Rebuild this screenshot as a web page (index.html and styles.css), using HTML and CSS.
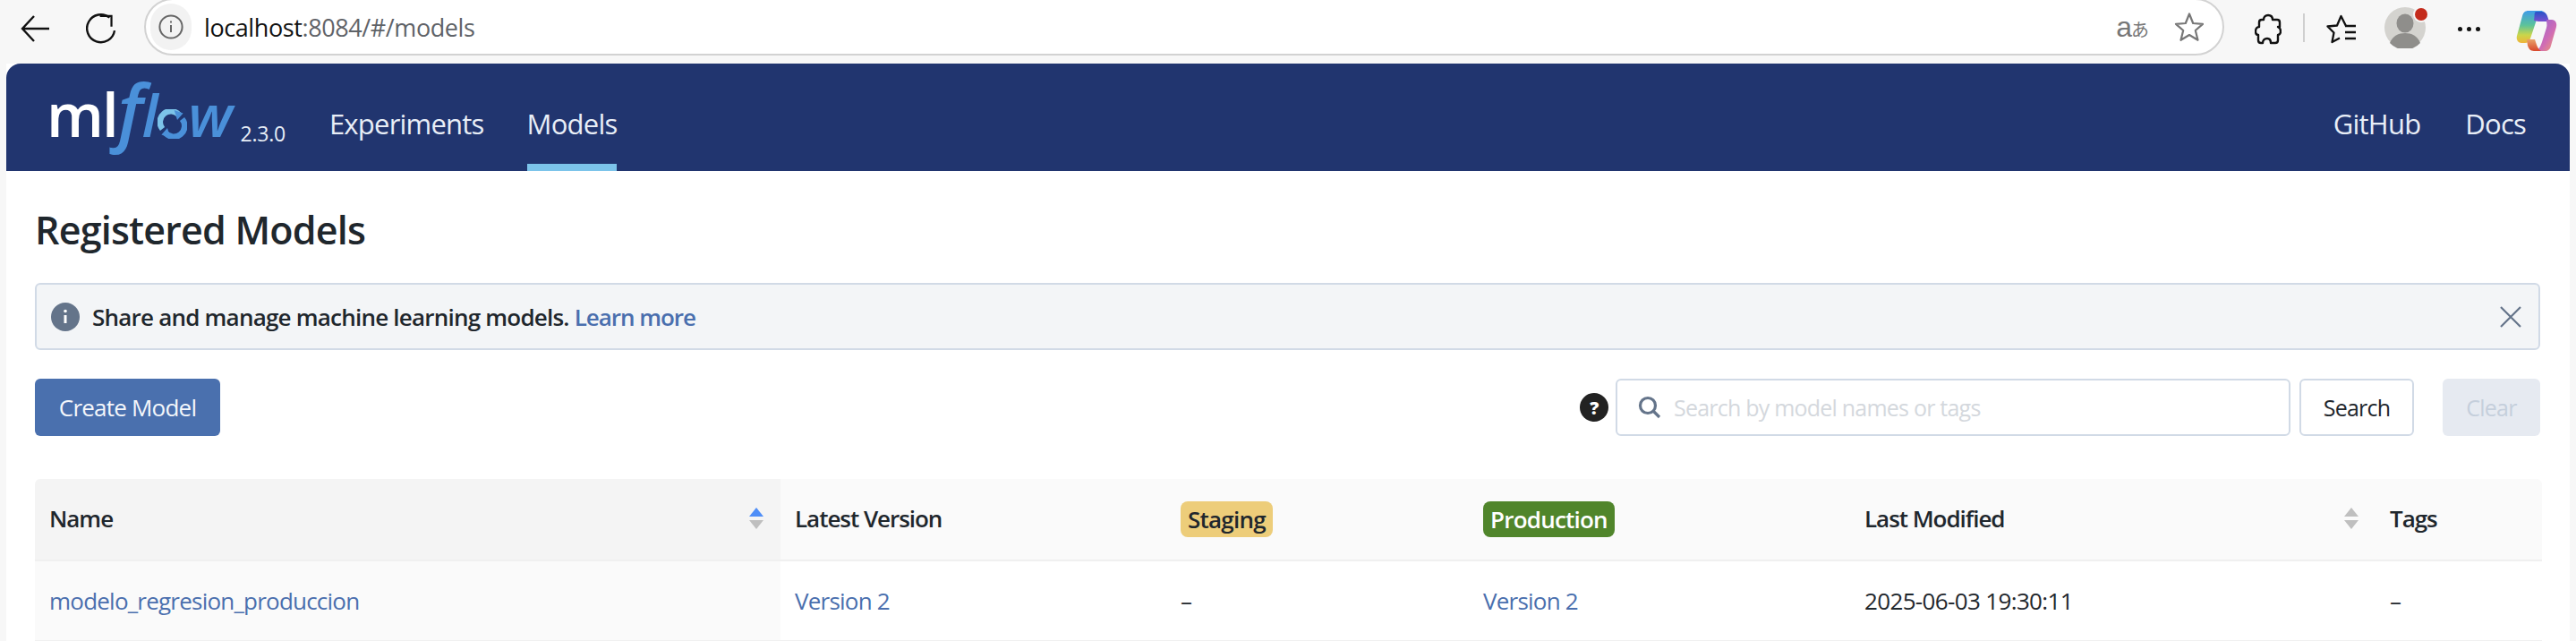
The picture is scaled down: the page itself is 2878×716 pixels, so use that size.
FILE: index.html
```html
<!DOCTYPE html>
<html lang="en">
<head>
<meta charset="utf-8">
<title>MLflow</title>
<link rel="stylesheet" href="styles.css">
</head>
<body>
<div class="toolbar">
  <svg class="tb-back" width="36" height="36" viewBox="0 0 36 36"><path d="M33 18H3M16 4 3 18l13 14" fill="none" stroke="#111" stroke-width="2.4"/></svg>
  <svg class="tb-reload" width="34" height="36" viewBox="0 0 34 36"><path d="M24.5 4.5A15.5 15.5 0 1 0 32 18" fill="none" stroke="#111" stroke-width="2.4" transform="rotate(8 17 19)"/><path d="M17 2h14v13" fill="none" stroke="#111" stroke-width="2.4" transform="translate(0 2) scale(.92)"/></svg>
  <div class="address">
    <span class="site-info"><svg width="28" height="28" viewBox="0 0 28 28"><circle cx="14" cy="14" r="12.6" fill="none" stroke="#666" stroke-width="2"/><path d="M14 12v8M14 7.5v2" stroke="#666" stroke-width="2"/></svg></span>
    <span class="url"><span class="url-host">localhost</span>:8084/#/models</span>
    <span class="translate">a<span class="translate-jp">あ</span></span>
    <svg class="addr-star" width="34" height="34" viewBox="0 0 34 34"><path d="M17 2.500 21.200 13 32 13.800 23.800 21 26.500 31.800 17 26 7.500 31.800 10.200 21 2 13.800 12.800 13Z" fill="none" stroke="#777" stroke-width="2.200" stroke-linejoin="round"/></svg>
  </div>
  <svg class="tb-ext" width="30" height="36" viewBox="0 0 30 36"><path d="M15 2c3 0 5 2 5 5h5c2 0 3 1 3 3v5c-3 0-1 0-2 0 0 0 3 1 3 5s-3 4-3 4v6c0 2-1 3-3 3h-5c0-3-1-5-4-5s-5 2-5 5H7c-2 0-3-1-3-3v-6c-2 0-3-2-3-4 0-3 2-5 4-5V10c0-2 1-3 3-3h2c0-3 2-5 5-5Z" fill="none" stroke="#111" stroke-width="2.400" stroke-linejoin="round"/></svg>
  <span class="tb-sep"></span>
  <svg class="tb-fav" width="34" height="34" viewBox="0 0 34 34"><path d="M22 13 16.500 2 12 12.500 1.500 13.500 8.500 20.500 6.500 31 15 26.500" fill="none" stroke="#111" stroke-width="2.300" stroke-linejoin="round"/><path d="M21 13h12M21 20h12M21 27h12" stroke="#111" stroke-width="2.300"/></svg>
  <span class="avatar">
    <svg width="46" height="46" viewBox="0 0 46 46"><circle cx="23" cy="23" r="23" fill="#d4d3cf"/><ellipse cx="23" cy="18" rx="9.500" ry="10.500" fill="#8f8e8b"/><path d="M6 40c3-8 10-11 17-11s14 3 17 11a23 23 0 0 1-34 0Z" fill="#8f8e8b"/></svg>
    <span class="avatar-dot"></span>
  </span>
  <span class="tb-more"><i></i><i></i><i></i></span>
  <svg class="copilot" width="46" height="46" viewBox="0 0 46 46">
    <defs>
      <linearGradient id="cp1" x1="0" y1="0" x2="0" y2="1"><stop offset="0" stop-color="#3f9be8"/><stop offset=".45" stop-color="#5cc39a"/><stop offset=".75" stop-color="#c9d64b"/><stop offset="1" stop-color="#f0b43a"/></linearGradient>
      <linearGradient id="cp2" x1="0" y1="0" x2="1" y2="1"><stop offset="0" stop-color="#8a5fd8"/><stop offset=".6" stop-color="#d06cb4"/><stop offset="1" stop-color="#f0a06c"/></linearGradient>
      <linearGradient id="cp3" x1="0" y1="0" x2="0" y2="1"><stop offset="0" stop-color="#2554c8"/><stop offset="1" stop-color="#7a4fd0"/></linearGradient>
      <linearGradient id="cp4" x1="0" y1="0" x2="0" y2="1"><stop offset="0" stop-color="#e8a36a"/><stop offset="1" stop-color="#d9482c"/></linearGradient>
    </defs>
    <path d="M14 1h17c-4 1-6 4-8 10l-7 21c-1 3-3 5-6 5H6C2 37 0 33 1 29L7 7c1-4 3-6 7-6Z" fill="url(#cp1)"/>
    <path d="M22 2h7c3 0 5 2 6 5l2 6-12 0-5-1c1-5 0-9 2-10Z" fill="url(#cp3)"/>
    <path d="M34 11h6c4 0 6 4 5 8l-6 21c-1 4-3 6-7 6H21c4-1 6-4 8-10l5-16c1-3 0-6 0-9Z" fill="url(#cp2)"/>
    <path d="M12 33h9l2 6c1 3 3 6 5 7h-8c-4 0-6-3-7-6Z" fill="url(#cp4)"/>
  </svg>
</div>

<div class="app">
  <header class="topnav">
    <a class="logo"><span class="logo-ml">ml</span><span class="logo-flow"><span class="logo-f">f</span>l<svg class="logo-o" width="33" height="33" viewBox="0 0 30 30"><path d="M5 20A11 11 0 0 1 22 6" fill="none" stroke="#7cc4ea" stroke-width="6"/><path d="M25 10A11 11 0 0 1 8 24" fill="none" stroke="#4a90d9" stroke-width="6"/><path d="M17 1l9 3-6 7ZM13 29l-9-3 6-7Z" fill="#4a90d9"/></svg>w</span></a>
    <span class="version">2.3.0</span>
    <nav class="nav-main">
      <a class="nav-link">Experiments</a>
      <a class="nav-link nav-active">Models</a>
    </nav>
    <nav class="nav-side">
      <a class="nav-link">GitHub</a>
      <a class="nav-link">Docs</a>
    </nav>
  </header>

  <main class="content">
    <h1 class="title">Registered Models</h1>
    <div class="alert">
      <svg class="alert-icon" width="32" height="32" viewBox="0 0 32 32"><circle cx="16" cy="16" r="16" fill="#64748a"/><path d="M16 14v9" stroke="#fff" stroke-width="3"/><circle cx="16" cy="9.500" r="1.800" fill="#fff"/></svg>
      <span class="alert-text">Share and manage machine learning models. <a class="link">Learn more</a></span>
      <svg class="alert-close" width="24" height="24" viewBox="0 0 24 24"><path d="M1 1l22 22M23 1 1 23" stroke="#64748a" stroke-width="2.200"/></svg>
    </div>
    <div class="actions">
      <button class="btn btn-primary">Create Model</button>
      <span class="search-group">
        <svg class="help" width="32" height="32" viewBox="0 0 32 32"><circle cx="16" cy="16" r="16" fill="#222"/></svg>
        <span class="help-mark">?</span>
        <span class="search-box">
          <svg width="26" height="26" viewBox="0 0 26 26"><circle cx="11" cy="11" r="8.500" fill="none" stroke="#64748a" stroke-width="3.200"/><path d="m17 17 7 7" stroke="#64748a" stroke-width="3.200"/></svg>
          <span class="placeholder">Search by model names or tags</span>
        </span>
        <button class="btn btn-outline">Search</button>
        <button class="btn btn-disabled">Clear</button>
      </span>
    </div>
    <table class="models">
      <thead>
        <tr>
          <th class="col-name col-sorted"><span class="th-inner">Name<span class="sort"><i class="up up-on"></i><i class="down"></i></span></span></th>
          <th class="col-latest">Latest Version</th>
          <th class="col-staging"><span class="badge badge-staging">Staging</span></th>
          <th class="col-prod"><span class="badge badge-prod">Production</span></th>
          <th class="col-mod"><span class="th-inner">Last Modified<span class="sort"><i class="up"></i><i class="down"></i></span></span></th>
          <th class="col-tags">Tags</th>
        </tr>
      </thead>
      <tbody>
        <tr>
          <td class="col-sorted-body"><a class="link">modelo_regresion_produccion</a></td>
          <td><a class="link">Version 2</a></td>
          <td>–</td>
          <td><a class="link">Version 2</a></td>
          <td class="cell-date">2025-06-03 19:30:11</td>
          <td>–</td>
        </tr>
      </tbody>
    </table>
  </main>
</div>
</body>
</html>
```

FILE: styles.css
```css
* { box-sizing: border-box; }
html, body { margin: 0; height: 716px; overflow: hidden; }
body {
  background: #f7f7f7;
  font-family: "Open Sans", "Noto Sans", sans-serif;
  color: #1f272d;
  letter-spacing: -0.03em;
  font-size: 26px;
}
.toolbar {
  height: 71px;
  display: flex;
  align-items: flex-start;
  padding-left: 22px;
}
.tb-back { margin-top: 14px; }
.tb-reload { margin: 14px 0 0 38px; }
.address {
  margin: -2px 0 0 31px;
  width: 2324px;
  height: 64px;
  border: 2px solid #d2d2d2;
  border-radius: 32px;
  background: #fff;
  display: flex;
  align-items: center;
  padding-right: 20px;
}
.site-info {
  width: 46px;
  height: 52px;
  margin-left: 5px;
  border-radius: 26px;
  background: #f2f2f2;
  display: flex;
  align-items: center;
  justify-content: center;
}
.url { margin-left: 14px; font-size: 27px; color: #5f6368; flex: 1; letter-spacing: -0.015em; }
.url-host { color: #111; }
.translate { font-size: 32px; color: #777; margin-right: 28px; font-family: "Liberation Sans", "Noto Sans CJK JP", sans-serif; letter-spacing: 0; display: inline-flex; align-items: baseline; }
.translate-jp { font-size: 20px; margin-left: -1px; font-family: "Noto Sans CJK JP", sans-serif; }
.addr-star { flex: none; }
.tb-ext { margin: 15px 0 0 34px; }
.tb-sep { width: 2px; height: 32px; background: #cfcfcf; margin: 15px 0 0 24px; }
.tb-fav { margin: 16px 0 0 24px; }
.avatar { position: relative; margin: 8px 0 0 31px; width: 46px; height: 46px; }
.avatar svg { display: block; }
.avatar-dot {
  position: absolute;
  top: 1px;
  right: -2px;
  width: 14px;
  height: 14px;
  border-radius: 50%;
  background: #c42b1c;
  box-shadow: 0 0 0 2px #f7f7f7;
}
.tb-more { display: flex; gap: 5px; margin: 30px 0 0 36px; }
.tb-more i { width: 5px; height: 5px; border-radius: 50%; background: #111; }
.copilot { margin: 11px 0 0 40px; }

.app { margin: 0 7px; height: 645px; background: #fff; }
.topnav {
  height: 120px;
  background: #21356f;
  border-radius: 16px 16px 0 0;
  display: flex;
  padding-left: 45px;
  color: #e8eef7;
}
.logo { display: flex; align-items: baseline; height: 120px; padding-top: 22px; line-height: 68px; }
.logo-ml { color: #fff; font-size: 67px; font-weight: 600; letter-spacing: -0.03em; }
.logo-flow {
  color: #4a90d9;
  font-size: 66px;
  font-weight: 600;
  font-style: italic;
  letter-spacing: -0.02em;
  margin-left: 1px;
}
.logo-f { font-size: 82px; line-height: 0; }
.logo-o { margin: 0 1px 0 1px; vertical-align: -2px; }
.version { font-size: 23px; margin: 63px 0 0 10px; letter-spacing: -0.01em; line-height: 30px; height: 30px; }
.nav-main { display: flex; gap: 48px; margin-left: 49px; }
.nav-side { display: flex; gap: 50px; margin-left: auto; margin-right: 49px; }
.nav-link {
  height: 120px;
  line-height: 68px;
  font-size: 31px;
  padding-top: 33px;
  border-bottom: 8px solid transparent;
}
.nav-active { border-bottom-color: #7cc4ea; }

.content { padding: 0 33px 0 32px; }
.title { margin: 0; font-size: 43px; font-weight: 600; line-height: 54px; padding-top: 39px; height: 125px; }
.alert {
  height: 75px;
  border: 2px solid #d1dae6;
  border-radius: 6px;
  background: #f3f5f7;
  display: flex;
  align-items: center;
  padding: 0 19px 0 16px;
}
.alert-text { margin-left: 14px; font-weight: 600; flex: 1; letter-spacing: -0.03em; }
.link { color: #4a6fae; }
.alert-text .link { font-weight: 600; letter-spacing: -0.04em; }
.actions { margin-top: 32px; height: 64px; display: flex; align-items: stretch; justify-content: space-between; }
.btn {
  font: inherit;
  letter-spacing: inherit;
  border-radius: 6px;
  border: 2px solid transparent;
  padding: 0;
  height: 64px;
}
.btn-primary { width: 207px; background: #4a70ae; color: #f4f7fb; font-size: 26px; }
.search-group { display: flex; align-items: center; }
.help { flex: none; }
.help-mark {
  position: absolute;
  width: 32px;
  margin-left: 0;
  text-align: center;
  color: #fff;
  font-size: 20px;
  font-weight: 800;
}
.search-box {
  margin-left: 8px;
  width: 754px;
  height: 64px;
  border: 2px solid #d1dae6;
  border-radius: 6px;
  display: flex;
  align-items: center;
  padding-left: 23px;
  background: #fff;
}
.placeholder { margin-left: 14px; color: #d4d8dd; font-size: 25px; }
.btn-outline { width: 128px; margin-left: 10px; background: #fff; border-color: #d1dae6; color: #1f272d; font-size: 25px; }
.btn-disabled { width: 109px; margin-left: 32px; background: #e6eaf1; color: #c5cfdc; font-size: 25px; }

.models { margin-top: 48px; width: 2801px; border-collapse: collapse; table-layout: fixed; }
.models th {
  height: 91px;
  background: #fafafa;
  border-bottom: 2px solid #f0f0f0;
  text-align: left;
  font-weight: 600;
  padding: 0 16px 2px;
  letter-spacing: -0.04em;
}
.models th:first-child { border-top-left-radius: 6px; }
.models th:last-child { border-top-right-radius: 6px; }
.models td { height: 90px; border-bottom: 2px solid #f0f0f0; padding: 0 16px; }
.models .col-sorted { background: #f4f4f4; }
.models .col-sorted-body { background: #fafafa; }
.col-name { width: 833px; }
.col-latest { width: 431px; }
.col-staging { width: 338px; }
.col-prod { width: 426px; }
.col-mod { width: 587px; }
.col-tags { width: 186px; }
.models .cell-date { letter-spacing: -0.025em; }
.th-inner { display: flex; align-items: center; justify-content: space-between; }
.sort { display: flex; flex-direction: column; gap: 4px; margin-right: 3px; }
.sort i { display: block; width: 0; height: 0; border-left: 8px solid transparent; border-right: 8px solid transparent; }
.sort .up { border-bottom: 10px solid #bfbfbf; }
.sort .down { border-top: 10px solid #bfbfbf; }
.sort .up-on { border-bottom-color: #4f8ef7; }
.badge { display: inline-block; height: 40px; line-height: 40px; padding: 0 8px; border-radius: 8px; vertical-align: middle; letter-spacing: -0.03em; }
.badge-staging { background: #edcd7a; color: #1f272d; }
.badge-prod { background: #50852b; color: #fff; }
```
